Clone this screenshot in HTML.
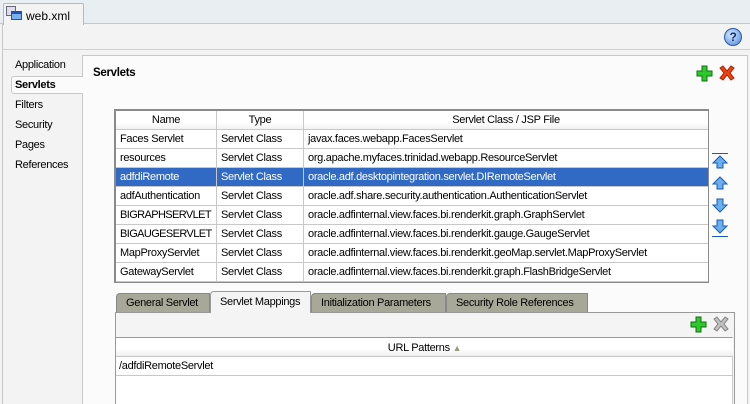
<!DOCTYPE html><html><head><style>
*{box-sizing:border-box;margin:0;padding:0}
body{width:750px;height:404px;overflow:hidden;background:#f3f3f3;font:11px "Liberation Sans",sans-serif;color:#000;position:relative;letter-spacing:-0.3px}
.a{position:absolute}
table{border-collapse:collapse;table-layout:fixed}
td{border:1px solid #c8c8c8;height:19px;padding:0 4px;white-space:nowrap;overflow:hidden}
</style></head><body>
<div class="a" style="left:0;top:0;width:750px;height:24px;background:#e9eef3;border-bottom:1px solid #c6c6c6"></div>
<div class="a" style="left:3px;top:3px;width:81px;height:22px;background:#f3f3f3;border:1px solid #b8b8b8;border-bottom:none;border-radius:2px 2px 0 0;padding:5px 0 0 22px;font-size:12px;letter-spacing:0">web.xml</div>
<div class="a" style="left:6px;top:6px;width:10px;height:10px;border:1px solid #667;background:#dde"></div>
<div class="a" style="left:11px;top:11px;width:11px;height:9px;border:1px solid #2050b0;background:#7ab0f0;border-top:3px solid #2050b0"></div>
<div class="a" style="left:2px;top:24px;width:748px;height:380px;border-left:1px solid #c8c8c8"></div>
<div class="a" style="left:724px;top:28px;width:18px;height:18px;border-radius:50%;background:radial-gradient(circle at 40% 35%,#d8eaff,#4a86d8);border:1px solid #2a5aa8;color:#10306e;font-weight:bold;font-size:12px;text-align:center;line-height:16px">?</div>
<div class="a" style="left:2px;top:49px;width:748px;height:1px;background:#d0d0d0"></div>
<div class="a" style="left:82px;top:55px;width:666px;height:349px;background:#fbfbfb;border-left:1px solid #c8c8c8;border-top:1px solid #c8c8c8;border-right:1px solid #c8c8c8"></div>
<div class="a" style="left:11px;top:76px;width:72px;height:18px;background:#fbfbfb;border:1px solid #c8c8c8;border-right:none;border-radius:3px 0 0 3px"></div>
<div class="a" style="left:15px;top:55px;line-height:20px;font-size:11px">Application<br><b>Servlets</b><br>Filters<br>Security<br>Pages<br>References</div>
<div class="a" style="left:93px;top:67px;font-weight:bold;font-size:11.5px">Servlets</div>
<svg class="a" style="left:696px;top:65px" width="40" height="18"><path d="M6 1h5v5h5v5h-5v5h-5v-5h-5v-5h5z" fill="#2cc82c" stroke="#107010"/><path d="M24 3l3-2 4 5 4-5 3 2-4 5 4 5-3 2-4-5-4 5-3-2 4-5z" fill="#f04010" stroke="#a02000"/></svg>
<div class="a" style="left:114px;top:109px;width:595px;height:174px;border:2px solid #8a8a8a;border-right-width:1px;border-bottom-width:1px;background:#fff;overflow:hidden">
<table style="width:594px;margin:-1px 0 0 -1px">
<col style="width:101px"><col style="width:87px"><col>
<tr style="background:linear-gradient(#fff 60%,#f0f0f0)"><td style="text-align:center">Name</td><td style="text-align:center">Type</td><td style="text-align:center">Servlet Class / JSP File</td></tr>
<tr><td>Faces Servlet</td><td>Servlet Class</td><td>javax.faces.webapp.FacesServlet</td></tr>
<tr><td>resources</td><td>Servlet Class</td><td>org.apache.myfaces.trinidad.webapp.ResourceServlet</td></tr>
<tr style="background:#316ac5;color:#fff"><td>adfdiRemote</td><td>Servlet Class</td><td>oracle.adf.desktopintegration.servlet.DIRemoteServlet</td></tr>
<tr><td>adfAuthentication</td><td>Servlet Class</td><td>oracle.adf.share.security.authentication.AuthenticationServlet</td></tr>
<tr><td style="letter-spacing:-0.6px">BIGRAPHSERVLET</td><td>Servlet Class</td><td>oracle.adfinternal.view.faces.bi.renderkit.graph.GraphServlet</td></tr>
<tr><td style="letter-spacing:-0.6px">BIGAUGESERVLET</td><td>Servlet Class</td><td>oracle.adfinternal.view.faces.bi.renderkit.gauge.GaugeServlet</td></tr>
<tr><td>MapProxyServlet</td><td>Servlet Class</td><td>oracle.adfinternal.view.faces.bi.renderkit.geoMap.servlet.MapProxyServlet</td></tr>
<tr><td>GatewayServlet</td><td>Servlet Class</td><td>oracle.adfinternal.view.faces.bi.renderkit.graph.FlashBridgeServlet</td></tr>
</table></div>
<svg class="a" style="left:711px;top:152px" width="20" height="90">
<g fill="#6ab0f0" stroke="#1a5ab0"><path d="M1 1.5h16" /><path d="M9 4l7 7h-4v5h-6v-5h-4z"/><path d="M9 25l7 7h-4v5h-6v-5h-4z"/><path d="M6 47h6v6h4l-7 7-7-7h4z"/><path d="M6 68h6v6h4l-7 7-7-7h4z"/><path d="M1 84.5h16"/></g></svg>
<div class="a" style="left:116px;top:293px;width:94px;height:20px;background:#a8a898;border:1px solid #888;border-bottom:none;border-radius:4px 0 0 0;padding:3px 0 0 9px">General Servlet</div>
<div class="a" style="left:311px;top:293px;width:135px;height:20px;background:#a8a898;border:1px solid #888;border-bottom:none;border-radius:4px 0 0 0;padding:3px 0 0 9px">Initialization Parameters</div>
<div class="a" style="left:446px;top:293px;width:142px;height:20px;background:#a8a898;border:1px solid #888;border-bottom:none;border-radius:4px 0 0 0;padding:3px 0 0 9px">Security Role References</div>
<div class="a" style="left:115px;top:312px;width:620px;height:92px;background:#f4f4f4;border:1px solid #999;border-bottom:none"></div>
<div class="a" style="left:210px;top:291px;width:101px;height:22px;background:#f4f4f4;border:1px solid #999;border-bottom:none;border-radius:4px 0 0 0;padding:4px 0 0 9px">Servlet Mappings</div>
<svg class="a" style="left:690px;top:316px" width="40" height="18"><path d="M6 1h5v5h5v5h-5v5h-5v-5h-5v-5h5z" fill="#2cc82c" stroke="#107010"/><path d="M24 3l3-2 4 5 4-5 3 2-4 5 4 5-3 2-4-5-4 5-3-2 4-5z" fill="#c0c0c0" stroke="#808080"/></svg>
<div class="a" style="left:116px;top:337px;width:617px;height:67px;background:#fff;border-top:1px solid #999;border-right:1px solid #ccc"></div>
<div class="a" style="left:116px;top:338px;width:617px;height:19px;background:linear-gradient(#fff 60%,#eee);border-bottom:1px solid #c8c8c8;text-align:center;padding-top:4px">URL Patterns <span style="color:#9a9a80;font-size:9px">▲</span></div>
<div class="a" style="left:116px;top:357px;width:617px;height:19px;border-bottom:1px solid #c8c8c8;padding:3px 0 0 3px">/adfdiRemoteServlet</div>
</body></html>
